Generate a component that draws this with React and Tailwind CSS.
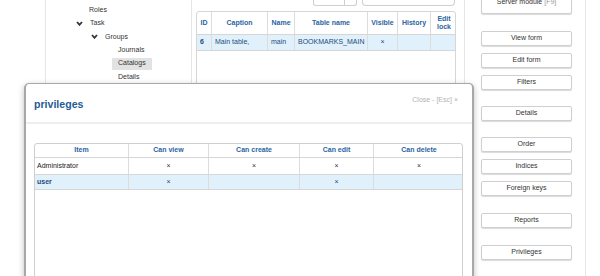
import React from "react";

const Chevron = () => (
  <svg width="7" height="5" viewBox="0 0 7 5" className="inline-block">
    <polyline points="1,1 3.5,3.8 6,1" fill="none" stroke="#333" strokeWidth="1.8" />
  </svg>
);

const Btn = ({ children, className = "" }) => (
  <div
    className={
      "w-[91px] h-[15px] flex items-center justify-center rounded-[2px] border border-[#cfcfcf] bg-white shadow-[0_1px_1px_rgba(0,0,0,0.15)] text-[7px] text-[#333] " +
      className
    }
  >
    {children}
  </div>
);

export default function App() {
  const mainCols = [
    ["ID", "w-[15px]"],
    ["Caption", "w-[56px]"],
    ["Name", "w-[27px]"],
    ["Table name", "w-[73px]"],
    ["Visible", "w-[30px]"],
    ["History", "w-[33px]"],
    ["Edit lock", "w-[26px]"],
  ];
  const mainRow = ["6", "Main table,", "main", "BOOKMARKS_MAIN", "×", "", ""];
  const privCols = [
    ["Item", "w-[94px]"],
    ["Can view", "w-[80px]"],
    ["Can create", "w-[91px]"],
    ["Can edit", "w-[74px]"],
    ["Can delete", "w-[90px]"],
  ];
  return (
    <div className="relative w-[600px] h-[276px] overflow-hidden bg-white font-['Liberation_Sans',Arial,sans-serif] text-[7px] text-[#333]">
      <div className="flex h-full">
        <div className="w-[45px] shrink-0" />
        {/* tree */}
        <div className="w-[147px] shrink-0 border-l border-r border-[#e6e6e6] pt-[3.3px]">
          <div className="h-[13.4px] flex items-center pl-[43px]">Roles</div>
          <div className="h-[13.4px] flex items-center pl-[30px] gap-[7px]">
            <Chevron />
            <span>Task</span>
          </div>
          <div className="h-[13.4px] flex items-center pl-[45px] gap-[7px]">
            <Chevron />
            <span>Groups</span>
          </div>
          <div className="h-[13.4px] flex items-center pl-[72px]">Journals</div>
          <div className="h-[13.4px] flex items-center pl-[66px]">
            <span className="h-[12px] flex items-center px-[6px] bg-[#e2e2e2]">Catalogs</span>
          </div>
          <div className="h-[13.4px] flex items-center pl-[72px]">Details</div>
        </div>
        {/* middle */}
        <div className="w-[273px] shrink-0 border-r border-[#e6e6e6] pl-[4px] pr-[8px]">
          <div className="flex h-[11px] items-start">
            <div className="ml-[117px] w-[44px] h-[6px] border border-t-0 border-[#cfcfcf] rounded-b-[3px] flex">
              <div className="w-[31px] border-r border-[#cfcfcf]" />
            </div>
            <div className="ml-[5px] w-[93px] h-[6px] border border-t-0 border-[#cfcfcf] rounded-b-[4px]" />
          </div>
          <div className="h-[300px] border border-[#d6d6d6] rounded-t-[3px]">
            <div className="flex h-[23px] border-b border-[#d6d6d6]">
              {mainCols.map(([c, w], i) => (
                <div
                  key={c}
                  className={
                    w +
                    " shrink-0 flex items-center justify-center text-center leading-[8px] font-bold text-[#2a65a3] " +
                    (i < mainCols.length - 1 ? "border-r border-[#dcdcdc]" : "")
                  }
                >
                  {c === "Edit lock" ? (
                    <span>
                      Edit
                      <br />
                      lock
                    </span>
                  ) : (
                    c
                  )}
                </div>
              ))}
            </div>
            <div className="flex h-[16px] bg-[#e1f1fc] border-b border-[#d6d6d6]">
              {mainRow.map((v, i) => (
                <div
                  key={i}
                  className={
                    mainCols[i][1] +
                    " shrink-0 flex items-center text-[#1d4b7a] " +
                    (i === 0 ? "font-bold pl-[3px] " : "") +
                    (i === 4 ? "justify-center " : i > 0 ? "pl-[3px] " : "") +
                    (i < mainCols.length - 1 ? "border-r border-[#dcdcdc]" : "")
                  }
                >
                  {v}
                </div>
              ))}
            </div>
          </div>
        </div>
        {/* right */}
        <div className="w-[121px] shrink-0 border-r border-[#e6e6e6] pl-[16px] flex flex-col">
          <Btn className="mt-[-9px] h-[23px]">
            <span>
              Server module <span className="text-[#999]">[F9]</span>
            </span>
          </Btn>
          <Btn className="mt-[17px]">View form</Btn>
          <Btn className="mt-[7px]">Edit form</Btn>
          <Btn className="mt-[7px]">Filters</Btn>
          <Btn className="mt-[16px]">Details</Btn>
          <Btn className="mt-[16px]">Order</Btn>
          <Btn className="mt-[7px]">Indices</Btn>
          <Btn className="mt-[7px]">Foreign keys</Btn>
          <Btn className="mt-[17px]">Reports</Btn>
          <Btn className="mt-[17px]">Privileges</Btn>
        </div>
      </div>

      {/* modal */}
      <div className="absolute left-[24px] top-[83px] w-[450px] h-[230px] bg-white border border-[#a8a8a8] border-l-2 border-r-2 rounded-[5px] shadow-[0_2px_6px_rgba(0,0,0,0.25)]">
        <div className="h-[40px] flex justify-between border-b-2 border-[#eeeeee]">
          <div className="pl-[8px] pt-[3px] flex items-center text-[10.6px] font-bold text-[#245c94]">privileges</div>
          <div className="pr-[14px] pt-[11px] text-[7px] text-[#b3b3b3]">Close - [Esc] ×</div>
        </div>
        <div className="pt-[19px] pl-[8px] pr-[9px]">
          <div className="h-[200px] border border-[#cfcfcf] rounded-t-[3px]">
            <div className="flex h-[14px] border-b border-[#d6d6d6]">
              {privCols.map(([c, w], i) => (
                <div
                  key={c}
                  className={
                    w +
                    " shrink-0 flex items-center justify-center font-bold text-[#2a65a3] " +
                    (i < privCols.length - 1 ? "border-r border-[#dcdcdc]" : "")
                  }
                >
                  {c}
                </div>
              ))}
            </div>
            <div className="flex h-[17px] border-b border-[#d6d6d6]">
              {["Administrator", "×", "×", "×", "×"].map((v, i) => (
                <div
                  key={i}
                  className={
                    privCols[i][1] +
                    " shrink-0 flex items-center " +
                    (i === 0 ? "pl-[2px] text-[#222] " : "justify-center ") +
                    (i < privCols.length - 1 ? "border-r border-[#dcdcdc]" : "")
                  }
                >
                  {v}
                </div>
              ))}
            </div>
            <div className="flex h-[15px] bg-[#e1f1fc] border-b border-[#d6d6d6]">
              {["user", "×", "", "×", ""].map((v, i) => (
                <div
                  key={i}
                  className={
                    privCols[i][1] +
                    " shrink-0 flex items-center text-[#1d4b7a] " +
                    (i === 0 ? "pl-[2px] font-bold " : "justify-center ") +
                    (i < privCols.length - 1 ? "border-r border-[#dcdcdc]" : "")
                  }
                >
                  {v}
                </div>
              ))}
            </div>
          </div>
        </div>
      </div>
    </div>
  );
}
